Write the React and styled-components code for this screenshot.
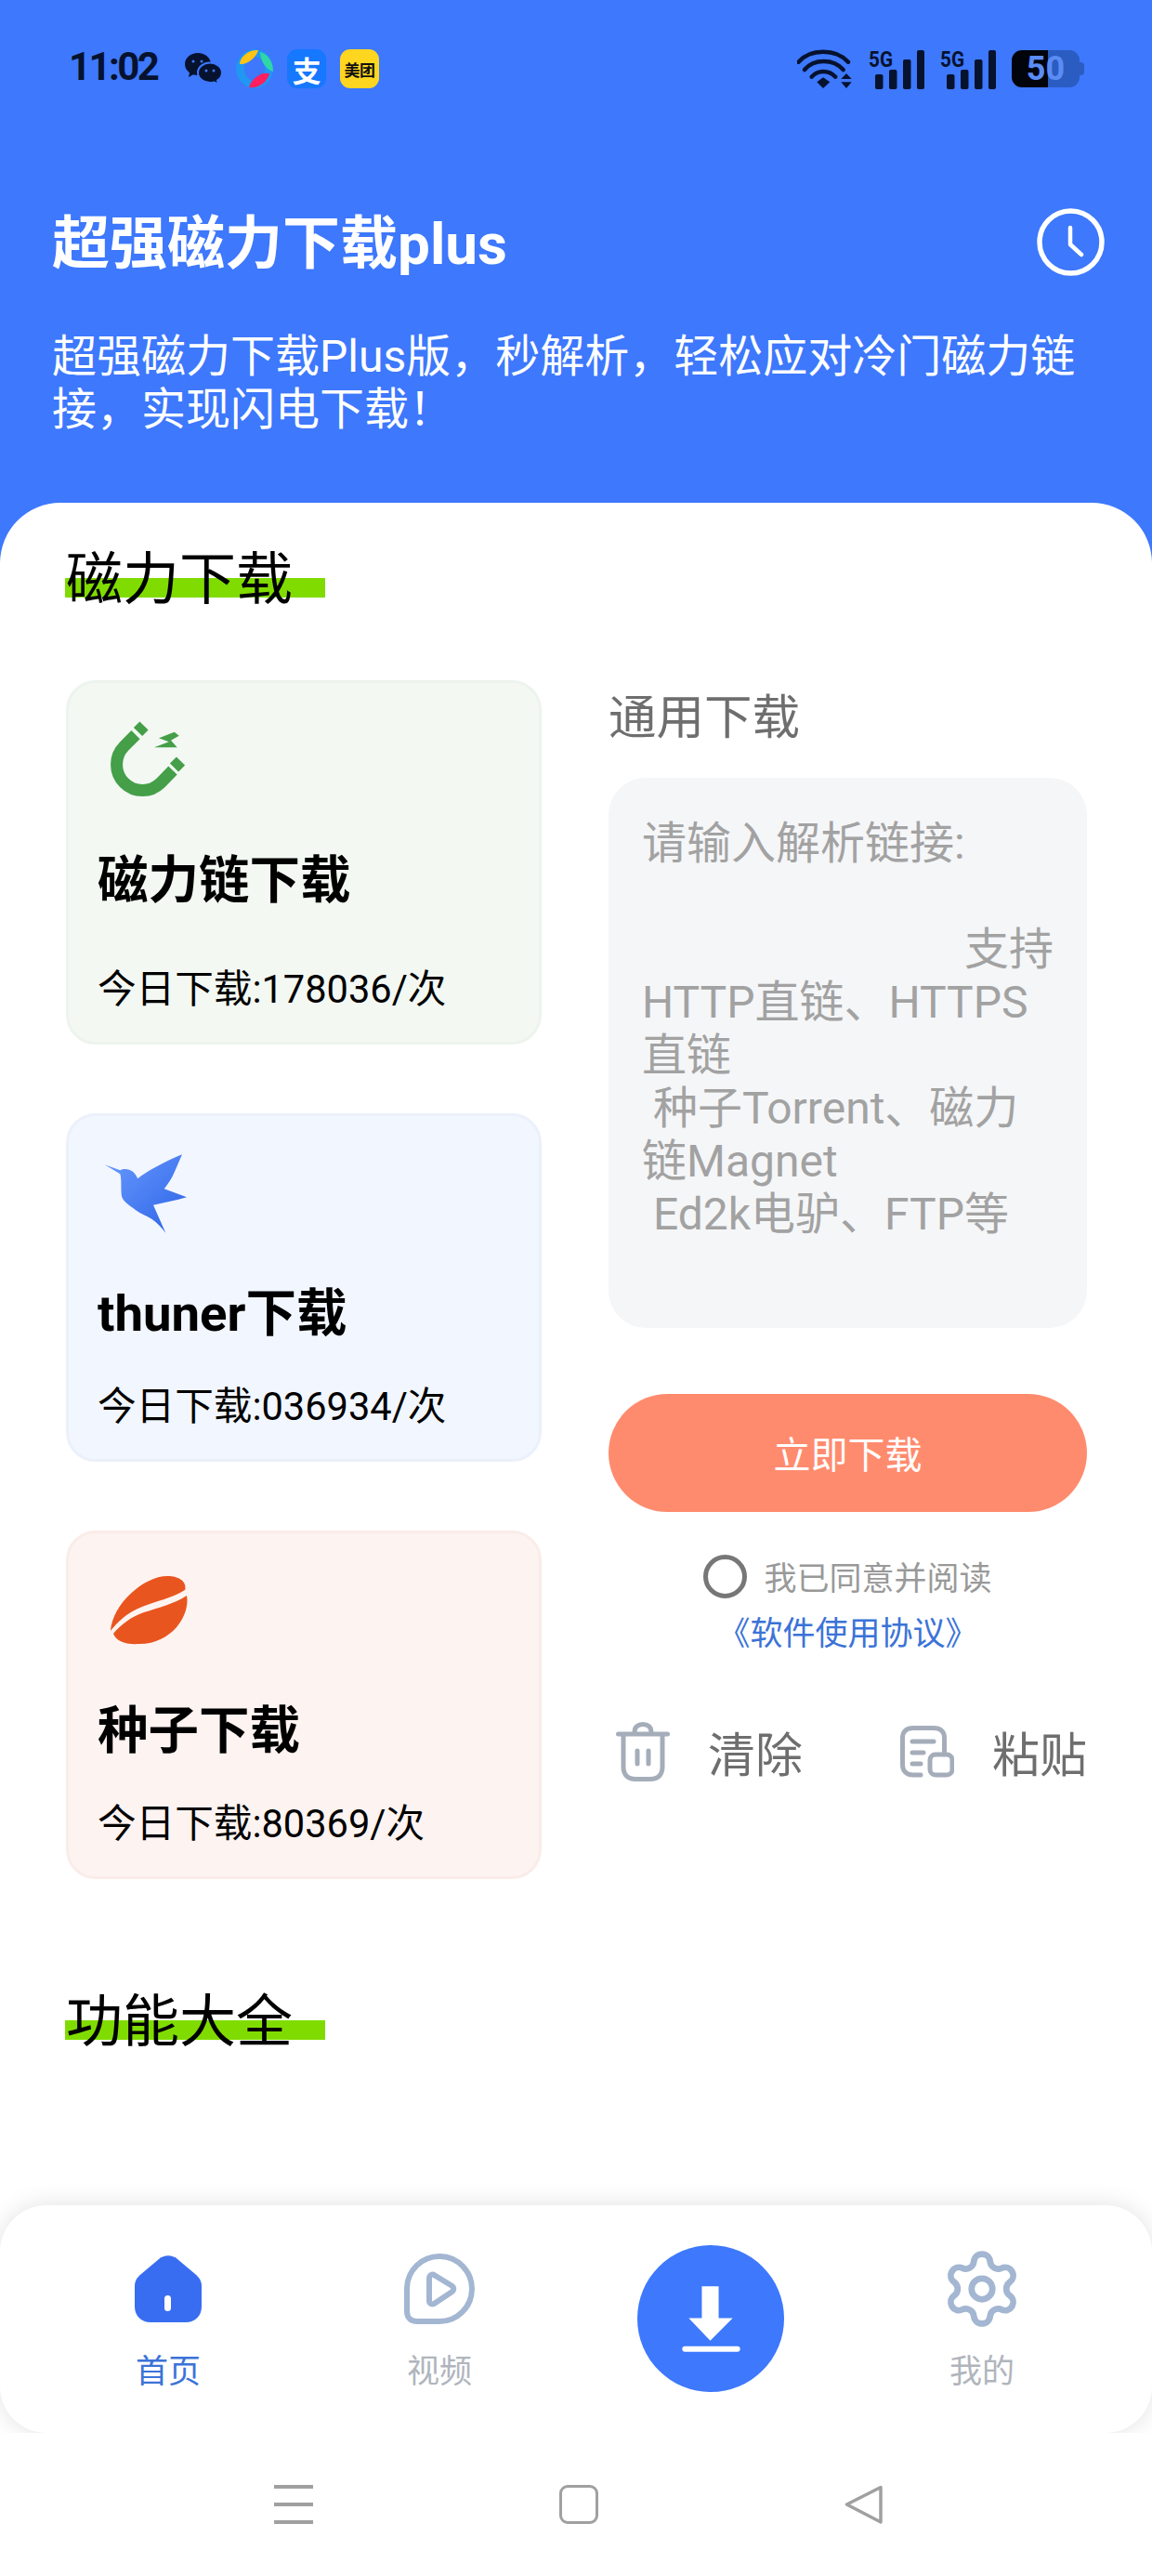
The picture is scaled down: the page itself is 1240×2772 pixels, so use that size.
import React from "react";
import styled, { createGlobalStyle } from "styled-components";
import { Settings } from "lucide-react";

const FONT = `Roboto, "Noto Sans CJK SC", sans-serif`;
const CJK = `"Noto Sans CJK SC", Roboto, sans-serif`;

const Global = createGlobalStyle`
  html, body { margin: 0; padding: 0; background: #fff; }
  * { box-sizing: border-box; }
  svg { display: block; }
`;

const Screen = styled.div`
  width: 1240px; height: 2772px; display: flex; flex-direction: column;
  overflow: hidden; background: #fff; font-family: ${FONT};
`;
const Header = styled.header`
  height: 541px; flex: none; background: #3d78fd; color: #fff;
`;
const StatusBar = styled.div`
  height: 148px; padding: 0 73px 0 74px; display: flex; align-items: center; justify-content: space-between;
`;
const StatusGroup = styled.div`
  display: flex; align-items: center; gap: ${p => p.$gap || 15}px;
`;
const Time = styled.span`
  font: 700 42px/44px Roboto, sans-serif; letter-spacing: -2.6px; color: #06122e;
  width: 97px; margin-right: 13px; margin-top: -4px; white-space: nowrap;
`;
const AppTile = styled.div`
  width: 42px; height: 42px; border-radius: 11px; background: ${p => p.$bg}; color: ${p => p.$fg};
  display: flex; align-items: center; justify-content: center;
  font: ${p => p.$w} ${p => p.$size}px/1 ${CJK}; white-space: nowrap; letter-spacing: -.5px;
`;
const Battery = styled.div`
  position: relative; width: 73px; height: 40px; border-radius: 11px; margin-right: 5px;
  background: linear-gradient(90deg, #02040c 0 53%, #2a5cc2 53% 100%);
  color: #5a8cf4; font: 700 36px/40px Roboto, sans-serif; text-align: center;
  &::after {
    content: ""; position: absolute; right: -5px; top: 13px; width: 5px; height: 14px;
    border-radius: 0 4px 4px 0; background: #2a5cc2;
  }
`;
const TitleRow = styled.div`
  margin-top: 76px; padding: 0 51px 0 56px; height: 73px;
  display: flex; align-items: center; justify-content: space-between;
`;
const Title = styled.h1`
  margin: 0; padding-top: 4px; font: 700 62px/73px ${FONT}; white-space: nowrap;
`;
const Subtitle = styled.p`
  margin: 58px 0 0; padding: 0 0 0 56px; font: 400 48px/57px ${FONT}; width: 1172px;
`;
const SheetWrap = styled.div`
  flex: 1; display: flex; flex-direction: column;
  background: linear-gradient(#3d78fd 0 70px, #fff 70px);
`;
const Sheet = styled.main`
  flex: 1; background: #fff; border-radius: 65px 65px 0 0; padding: 44px 70px 0 71px;
`;
const SectionTitle = styled.h2`
  position: relative; display: block; width: 280px; margin: ${p => p.$top || 0}px 0 0; height: 70px;
  font: 400 61px/68px ${CJK}; color: #000; white-space: nowrap;
  &::before {
    content: ""; position: absolute; left: -1px; top: 37px; width: 280px; height: 21px; background: #80dc00;
  }
  & > span { position: relative; }
`;
const Columns = styled.div`
  margin-top: 77px; display: grid; grid-template-columns: 512px 515px; column-gap: 72px;
`;
const CardList = styled.div`
  display: flex; flex-direction: column; gap: 74px;
`;
const Card = styled.article`
  height: ${p => p.$h}px; border-radius: 32px; background: ${p => p.$bg}; border: 3px solid ${p => p.$line};
  padding: 38px 31px 31px; display: flex; flex-direction: column;
`;
const CardIcon = styled.div`
  height: 90px; width: 100px;
`;
const CardTitle = styled.h3`
  margin: 49px 0 0; font: 700 54.5px/70px ${FONT}; color: #000; white-space: nowrap;
`;
const CardSub = styled.p`
  margin: auto 0 0; font: 400 41.6px/50px ${FONT}; color: #000; white-space: nowrap;
`;
const RightCol = styled.section`
  display: flex; flex-direction: column;
`;
const FormLabel = styled.h3`
  margin: 0; height: 72px; font: 400 51.5px/72px ${CJK}; color: #6e6e6e;
`;
const Field = styled.div`
  margin-top: 33px; height: 592px; border-radius: 40px; background: #f5f6f8; padding: 42px 36px;
  font: 400 48px/57px ${FONT}; color: #a2a2a2;
`;
const FieldLine = styled.div`
  height: 57px; white-space: pre; text-align: ${p => p.$right ? "right" : "left"};
`;
const Submit = styled.button`
  margin-top: 71px; height: 127px; border: 0; border-radius: 64px; background: #ff8b6e; color: #fff;
  font: 400 40px/127px ${CJK}; padding: 0;
`;
const Agree = styled.div`
  margin-top: 45px; display: flex; align-items: center; justify-content: center; gap: 18px;
  font: 400 35px/48px ${CJK}; color: #999;
`;
const Radio = styled.span`
  width: 47px; height: 47px; border-radius: 50%; border: 5px solid #777; flex: none;
`;
const Link = styled.a`
  display: block; margin-top: 11px; text-align: center; font: 400 35px/48px ${CJK}; color: #3b73d8;
`;
const Actions = styled.div`
  margin-top: 74px; display: flex; justify-content: space-between; padding-left: 8px;
`;
const Action = styled.div`
  display: flex; align-items: center; gap: ${p => p.$gap}px;
  font: 400 51px/64px ${CJK}; color: #6e6e6e;
`;
const Nav = styled.nav`
  position: relative; z-index: 1; flex: none; height: 245px; background: #fff; border-radius: 50px;
  box-shadow: 0 0 26px rgba(0,0,0,.12); padding: 0 37px 0 35px;
  display: grid; grid-template-columns: repeat(4, 292px);
`;
const Tab = styled.div`
  display: flex; flex-direction: column; align-items: center; padding-top: 51px;
`;
const TabIcon = styled.div`
  height: 77px; display: flex; align-items: center; justify-content: center;
`;
const TabLabel = styled.span`
  margin-top: 26px; font: 400 35px/44px ${CJK}; color: ${p => p.$on ? "#3b73d8" : "#b0b5bd"};
`;
const CenterCell = styled.div`
  display: flex; justify-content: center; padding-top: 43px;
`;
const CenterButton = styled.button`
  width: 158px; height: 158px; border-radius: 50%; background: #3d78fd; border: 0; padding: 0;
`;
const SystemBar = styled.div`
  position: relative; z-index: 2; flex: none; height: 154px; background: #fff;
  display: grid; grid-template-columns: 42px 42px 42px; column-gap: 265px; justify-content: center;
  padding: 56px 0 0 6px;
`;
const MenuGlyph = styled.div`
  width: 42px; height: 42px; display: flex; flex-direction: column; justify-content: space-between;
  & > i { display: block; height: 4px; background: #a0a0a0; }
`;
const SquareGlyph = styled.div`
  width: 42px; height: 42px; border: 3.5px solid #a0a0a0; border-radius: 9px;
`;
const SignalSvg = styled.svg`
  margin-top: -5px;
`;

const WeChat = () => (
  <svg width="40" height="34" viewBox="0 0 40 34" fill="#06122e">
    <path d="M14 0C6.3 0 0 5.400 0 12c0 3.800 2 7 5 9.200L4 26l5-2.700c1.500.4 3 .7 5 .7 7.700 0 14-5.400 14-12S21.700 0 14 0z" />
    <path d="M27 10.500c-7.200 0-13 4.800-13 10.700s5.800 10.800 13 10.800c1.500 0 3-.2 4.300-.6L36 34l-1-4.400c3-2 5-5 5-8.400 0-5.900-5.800-10.700-13-10.700z" stroke="#3d78fd" strokeWidth="2" />
    <circle cx="9" cy="9" r="1.500" fill="#3d78fd" /><circle cx="18" cy="9" r="1.500" fill="#3d78fd" />
    <circle cx="23" cy="19" r="1.500" fill="#3d78fd" /><circle cx="31" cy="19" r="1.500" fill="#3d78fd" />
  </svg>
);
const Pinwheel = () => (
  <svg width="40" height="42" viewBox="0 0 40 42">
    <ellipse cx="20" cy="21" rx="20" ry="21" fill="#2196f3" />
    <ellipse cx="20" cy="21" rx="11" ry="13" fill="#3d78fd" />
    <path d="M4 16C4 8 14 0 24 1 22 9 12 17 4 16z" fill="#ffc414" />
    <path d="M26 3c8 2 14 10 14 21C32 22 26 12 26 3z" fill="#2fd6a6" />
    <path d="M14 41c2-8 12-17 22-15-2 9-12 17-22 15z" fill="#ff1f5e" />
  </svg>
);
const Wifi = () => (
  <svg width="60" height="42" viewBox="0 0 60 42" fill="none" stroke="#06122e" strokeWidth="4.500" strokeLinecap="round">
    <path d="M1.500 13.700C14 -1 42 -1 55 13.700" />
    <path d="M8 22C18 10 39 10 49.700 22" />
    <path d="M15.700 29.700C22 22 34 22 41.300 29.700" />
    <path d="M21.300 35.300 28 30.300l7.300 5L28 42z" fill="#06122e" stroke="none" />
    <path d="M47.300 32 53 26l5.700 6zM47.300 35.300h11.400L53 42z" fill="#06122e" stroke="none" />
  </svg>
);
const Signal = () => (
  <SignalSvg width="60" height="48" viewBox="0 -5 60 48" fill="#06122e">
    <text x="0" y="19" fontFamily="Roboto, sans-serif" fontWeight="700" fontSize="24" textLength="26" lengthAdjust="spacingAndGlyphs">5G</text>
    <rect x="7" y="27" width="8.500" height="16" rx="2" />
    <rect x="22" y="22" width="8.500" height="21" rx="2" />
    <rect x="37" y="11" width="8.500" height="32" rx="2" />
    <rect x="52" y="1" width="8" height="42" rx="2" />
  </SignalSvg>
);
const Clock = () => (
  <svg width="73" height="73" viewBox="0 0 73 73" fill="none" stroke="#fff" strokeWidth="5.500" strokeLinecap="round" strokeLinejoin="round">
    <circle cx="36.500" cy="36.500" r="33.500" />
    <path d="M36 21v18l12 11" strokeWidth="4.500" />
  </svg>
);
const Magnet = () => (
  <svg width="100" height="90" viewBox="0 0 100 90">
    <path d="M41 17.700 28.700 30A27.700 27.700 0 0 0 68 69.300L81 56" fill="none" stroke="#449f48" strokeWidth="13" />
    <path d="M43.500 14.500 50 8M82.500 53 89.500 46" fill="none" stroke="#449f48" strokeWidth="13" />
    <path d="M61 31.300 76.700 25.300 66 21.300 82.700 14.700 87.700 18.700 79 23.700 85.700 31.300z" fill="#449f48" />
  </svg>
);
const Bird = () => (
  <svg width="100" height="90" viewBox="0 0 100 90">
    <defs>
      <linearGradient id="bird" x1="0" y1="0" x2="1" y2="1">
        <stop offset="0" stopColor="#6a9bff" /><stop offset="1" stopColor="#2b62e6" />
      </linearGradient>
    </defs>
    <path d="M7.700 14.300 24.300 20.300C28 18 34 18.500 38.300 22Q41.500 25 43.300 29.300C52 22 72 11 91 3.300L83.300 21C80 29 76 35 71.700 40.300L96 49.300C84 53 72 55 60 57.700L73.300 87.700Q66 78 58.300 72.700C50 68 44 66 38.300 61 30 55 26 52 25.700 46 25 38 26 30 24.300 24.300Z" fill="url(#bird)" />
  </svg>
);
const Bean = () => (
  <svg width="100" height="90" viewBox="0 0 100 90" fill="#e9551e">
    <path d="M14 67C16 38 50 8 75 8 88 8 96 14 94.300 22.700 80 32 62 35 48 41 32 47 22 57 14 67z" />
    <path d="M17 70C25 60 36 52 50 47 66 42 82 38 96 29 100 50 80 81 45 81 30 82 20 78 17 70z" />
  </svg>
);
const Trash = () => (
  <svg width="58" height="64" viewBox="0 0 58 64" fill="none" stroke="#a5adba" strokeWidth="5" strokeLinecap="round" strokeLinejoin="round">
    <path d="M2.500 13h53" />
    <path d="M20 11c0-6 4-8.500 9-8.500s9 2.500 9 8.500" />
    <path d="M8 15v33c0 9 5 13.500 13 13.500h16c8 0 13-4.500 13-13.500V15" />
    <path d="M23 31v14M35 31v14" />
  </svg>
);
const Paste = () => (
  <svg width="58" height="56" viewBox="0 0 58 56" fill="none" stroke="#a5adba" strokeWidth="5" strokeLinecap="round" strokeLinejoin="round">
    <path d="M22 53H14C7 53 2.500 49 2.500 42V13C2.500 6 7 2.500 14 2.500H36C43 2.500 47.500 6 47.500 13v15" />
    <path d="M13 17h23M13 29h12M13 41h9" />
    <rect x="32" y="31" width="24" height="22" rx="6" />
  </svg>
);
const Home = () => (
  <svg width="72" height="72" viewBox="0 0 72 72">
    <path d="M26 4c6-5 14-5 20 0l19 16c4 3.500 7 7 7 13v22c0 10-7 17-17 17H17C7 72 0 65 0 55V33c0-6 3-9.500 7-13z" fill="#386df2" />
    <rect x="32" y="43" width="7" height="17" rx="3.500" fill="#fff" />
  </svg>
);
const Play = () => (
  <svg width="76" height="77" viewBox="0 0 76 77" fill="none" stroke="#a3b6d2" strokeWidth="6" strokeLinejoin="round">
    <path d="M3 38a35 35 0 1 1 35 36H14C7 74 3 70 3 63z" />
    <path d="M27 28c0-4 3-5.500 6-3.500l18 11c3 2 3 5 0 7l-18 12c-3 2-6 .5-6-3z" />
  </svg>
);
const DownloadMark = () => (
  <svg width="158" height="158" viewBox="0 0 157 157" fill="#fff">
    <path d="M69 44h18v34h15l-24 24-23-24h14z" />
    <rect x="48" y="108" width="62" height="6" rx="3" />
  </svg>
);
const Back = () => (
  <svg width="42" height="42" viewBox="0 0 42 42" fill="none" stroke="#a0a0a0" strokeWidth="3.500" strokeLinejoin="round">
    <path d="M39 2.500 2.500 21 39 40z" />
  </svg>
);

export default function App() {
  return (
    <Screen>
      <Global />
      <Header>
        <StatusBar>
          <StatusGroup>
            <Time>11:02</Time>
            <WeChat />
            <Pinwheel />
            <AppTile $bg="#1677ff" $fg="#fff" $w={700} $size={31}>支</AppTile>
            <AppTile $bg="#ffd61f" $fg="#111" $w={700} $size={17}>美团</AppTile>
          </StatusGroup>
          <StatusGroup $gap={17}>
            <Wifi />
            <Signal />
            <Signal />
            <Battery>50</Battery>
          </StatusGroup>
        </StatusBar>
        <TitleRow>
          <Title>超强磁力下载plus</Title>
          <Clock />
        </TitleRow>
        <Subtitle>超强磁力下载Plus版，秒解析，轻松应对冷门磁力链接，实现闪电下载！</Subtitle>
      </Header>
      <SheetWrap>
        <Sheet>
          <SectionTitle><span>磁力下载</span></SectionTitle>
          <Columns>
            <CardList>
              <Card $h={392} $bg="#f3f8f3" $line="#edf3ed">
                <CardIcon><Magnet /></CardIcon>
                <CardTitle>磁力链下载</CardTitle>
                <CardSub>今日下载:178036/次</CardSub>
              </Card>
              <Card $h={375} $bg="#f2f6ff" $line="#ebf0fa">
                <CardIcon><Bird /></CardIcon>
                <CardTitle>thuner下载</CardTitle>
                <CardSub>今日下载:036934/次</CardSub>
              </Card>
              <Card $h={375} $bg="#fdf3f1" $line="#faece9">
                <CardIcon><Bean /></CardIcon>
                <CardTitle>种子下载</CardTitle>
                <CardSub>今日下载:80369/次</CardSub>
              </Card>
            </CardList>
            <RightCol>
              <FormLabel>通用下载</FormLabel>
              <Field>
                <FieldLine>请输入解析链接:</FieldLine>
                <FieldLine />
                <FieldLine $right>支持</FieldLine>
                <FieldLine>HTTP直链、HTTPS</FieldLine>
                <FieldLine>直链</FieldLine>
                <FieldLine> 种子Torrent、磁力</FieldLine>
                <FieldLine>链Magnet</FieldLine>
                <FieldLine> Ed2k电驴、FTP等</FieldLine>
              </Field>
              <Submit>立即下载</Submit>
              <Agree><Radio />我已同意并阅读</Agree>
              <Link>《软件使用协议》</Link>
              <Actions>
                <Action $gap={41}><Trash />清除</Action>
                <Action $gap={41}><Paste />粘贴</Action>
              </Actions>
            </RightCol>
          </Columns>
          <SectionTitle $top={115}><span>功能大全</span></SectionTitle>
        </Sheet>
      </SheetWrap>
      <Nav>
        <Tab><TabIcon><Home /></TabIcon><TabLabel $on>首页</TabLabel></Tab>
        <Tab><TabIcon><Play /></TabIcon><TabLabel>视频</TabLabel></Tab>
        <CenterCell><CenterButton><DownloadMark /></CenterButton></CenterCell>
        <Tab><TabIcon><Settings size={90} color="#a3b6d2" strokeWidth={1.8} /></TabIcon><TabLabel>我的</TabLabel></Tab>
      </Nav>
      <SystemBar>
        <MenuGlyph><i /><i /><i /></MenuGlyph>
        <SquareGlyph />
        <Back />
      </SystemBar>
    </Screen>
  );
}
